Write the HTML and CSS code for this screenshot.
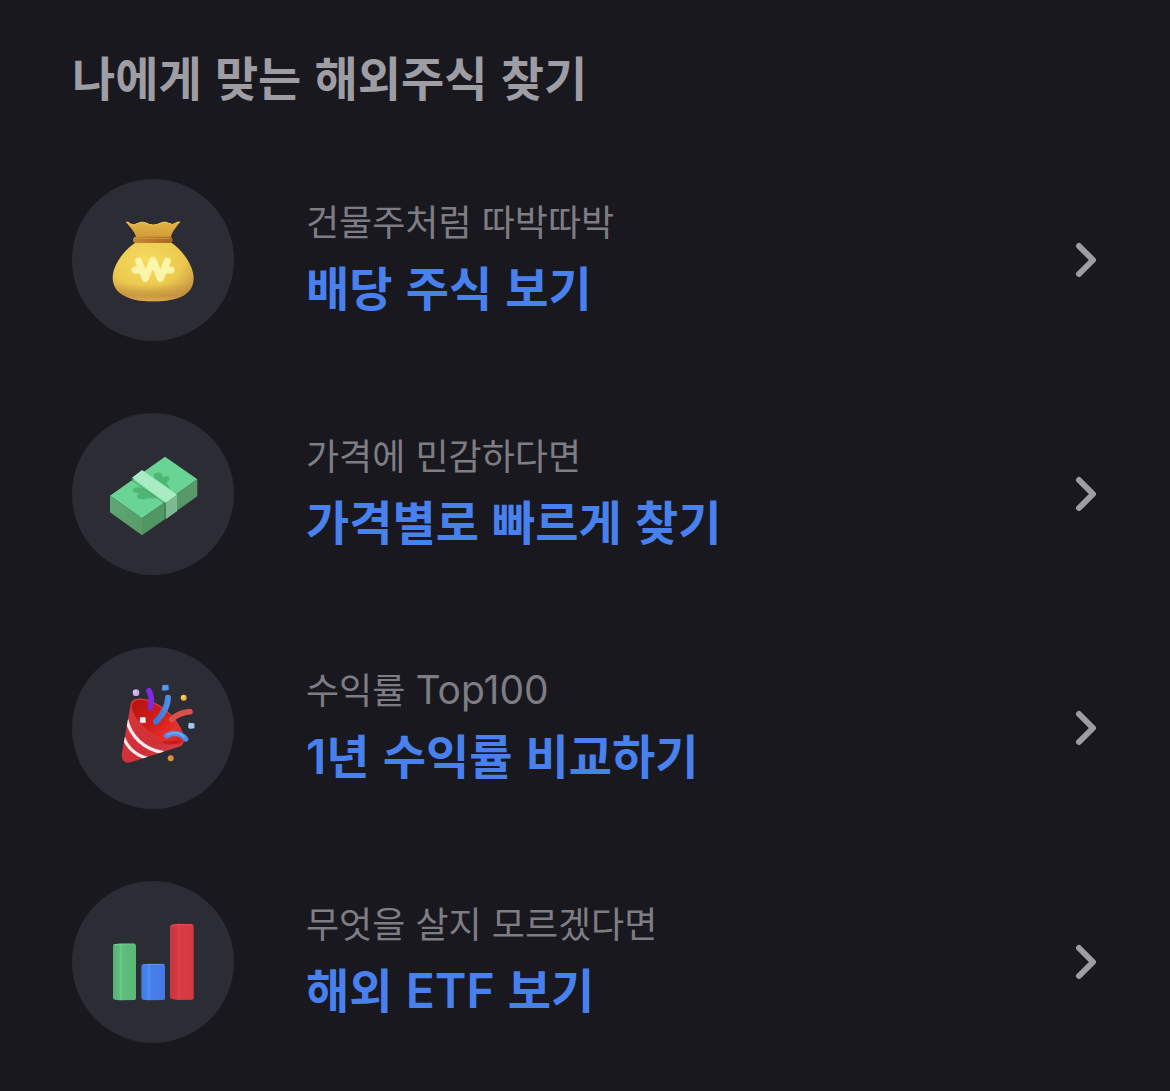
FILE: index.html
```html
<!DOCTYPE html>
<html lang="ko">
<head>
  <meta charset="UTF-8" />
  <meta name="viewport" content="width=device-width, initial-scale=1.0"/>
  <title>해외주식 찾기</title>
  <link rel="stylesheet" href="styles.css">
</head>
<body>
  <main class="finder">
    <h1>나에게 맞는 해외주식 찾기</h1>
    <nav class="list">
      <a class="item" href="#dividend">
        <span class="icon">
          <svg viewBox="114 120 270 270" aria-hidden="true">
            <defs>
              <radialGradient id="bag" cx="0.42" cy="0.3" r="0.75">
                <stop offset="0" stop-color="#f5dc60"/>
                <stop offset="0.6" stop-color="#ecc94f"/>
                <stop offset="1" stop-color="#c69340"/>
              </radialGradient>
              <linearGradient id="bagBase" x1="0" y1="0" x2="0" y2="1">
                <stop offset="0.7" stop-color="#c08a3c" stop-opacity="0"/>
                <stop offset="0.9" stop-color="#c08a3c" stop-opacity="0.55"/>
                <stop offset="1" stop-color="#e0b458" stop-opacity="0.7"/>
              </linearGradient>
              <linearGradient id="bagTop" x1="0" y1="0" x2="0" y2="1">
                <stop offset="0" stop-color="#e3b444"/>
                <stop offset="1" stop-color="#cf9a38"/>
              </linearGradient>
              <linearGradient id="rope" x1="0" y1="0" x2="1" y2="0">
                <stop offset="0" stop-color="#c48a35"/>
                <stop offset="0.5" stop-color="#b97828"/>
                <stop offset="1" stop-color="#a5661f"/>
              </linearGradient>
            </defs>
            <path d="M168 142Q174 139 182 147Q190 153 204 145Q214 139 226 143Q238 150 250 150Q262 150 272 144Q286 138 296 145Q308 152 318 144Q324 139 330 142C318 157 307 169 302 188H199C194 170 181 157 168 142Z" fill="url(#bagTop)"/>
            <path d="M168 142Q174 139 182 147Q190 153 204 145Q214 139 226 143Q238 150 250 150Q262 150 272 144Q286 138 296 145Q308 152 318 144Q324 139 330 142" fill="none" stroke="#f3cf58" stroke-width="3"/>
            <path d="M198 202H302C333 220 371 270 371 310C371 355 332 379 249 379C166 379 128 350 128 308C128 270 162 225 198 202Z" fill="url(#bag)"/>
            <path d="M198 202H302C333 220 371 270 371 310C371 355 332 379 249 379C166 379 128 350 128 308C128 270 162 225 198 202Z" fill="url(#bagBase)"/>
            <rect x="189" y="185" width="119" height="19" rx="9" fill="url(#rope)"/>
            <path d="M196 190H300" stroke="#d29a45" stroke-width="3" stroke-linecap="round"/>
            <path d="M206 258L226 310L249 256L271 310L292 258M195 285H214M284 285H303" fill="none" stroke="#fbf5aa" stroke-width="21" stroke-linecap="round" stroke-linejoin="round"/>
          </svg>
        </span>
        <span class="text">
          <span class="sub">건물주처럼 따박따박</span>
          <strong class="name">배당 주식 보기</strong>
        </span>
        <svg class="arrow" viewBox="0 0 24 36" aria-hidden="true"><path d="M5 4L19 18L5 32"/></svg>
      </a>

      <a class="item" href="#price">
        <span class="icon">
          <svg viewBox="114 117 270 270" aria-hidden="true">
            <defs>
              <linearGradient id="cashLeft" x1="0" y1="0" x2="1" y2="1">
                <stop offset="0" stop-color="#5ea873"/>
                <stop offset="1" stop-color="#579b69"/>
              </linearGradient>
              <linearGradient id="cashRight" x1="0" y1="1" x2="1" y2="0">
                <stop offset="0" stop-color="#4f9563"/>
                <stop offset="1" stop-color="#579b69"/>
              </linearGradient>
            </defs>
            <path d="M120 257L285 140L382 208L216 325Z" fill="#6ad494"/>
            <path d="M120 257L216 325V376L120 307Z" fill="url(#cashLeft)"/>
            <path d="M216 325L382 208V259L216 376Z" fill="url(#cashRight)"/>
            <path d="M188 239C190 230 210 229 221 236L262 262Q250 268 238 264Q222 270 207 266C196 261 201 253 210 251L198 248Q188 246 188 239Z" fill="#4fb676"/>
            <path d="M251 196C251 187 268 185 276 192Q281 199 279 203Q286 196 295 199C302 205 299 213 289 217L301 237L254 206Z" fill="#4fb676"/>
            <path d="M184 203L190 212L288 282V326L282 328V280L184 210Z" fill="#3f8757"/>
            <path d="M186 203L216 180L321 254L288 278Z" fill="#a9ebc2"/>
            <path d="M288 278L321 254V304L288 327Z" fill="#7fb992"/>
          </svg>
        </span>
        <span class="text">
          <span class="sub">가격에 민감하다면</span>
          <strong class="name">가격별로 빠르게 찾기</strong>
        </span>
        <svg class="arrow" viewBox="0 0 24 36" aria-hidden="true"><path d="M5 4L19 18L5 32"/></svg>
      </a>

      <a class="item" href="#return">
        <span class="icon">
          <svg viewBox="114 114 270 270" aria-hidden="true">
            <defs>
              <linearGradient id="cone" x1="0" y1="0" x2="1" y2="1">
                <stop offset="0" stop-color="#d93a42"/>
                <stop offset="0.6" stop-color="#cf3038"/>
                <stop offset="1" stop-color="#d94a50"/>
              </linearGradient>
              <linearGradient id="mouth" x1="0" y1="0" x2="1" y2="1">
                <stop offset="0" stop-color="#b3120f"/>
                <stop offset="0.5" stop-color="#d41f1c"/>
                <stop offset="0.75" stop-color="#e8302a"/>
                <stop offset="1" stop-color="#c81c1c"/>
              </linearGradient>
              <linearGradient id="streamer" x1="0" y1="0" x2="1" y2="0">
                <stop offset="0" stop-color="#3d76d8"/>
                <stop offset="1" stop-color="#4f8ce6"/>
              </linearGradient>
              <clipPath id="coneShape">
                <path d="M182 178C184 158 220 154 256 174C310 200 344 258 341 288C340 300 333 304 322 307L183 352C166 357 153 347 155 329Z"/>
              </clipPath>
            </defs>
            <g clip-path="url(#coneShape)">
              <rect x="150" y="150" width="200" height="210" fill="url(#cone)"/>
              <path d="M170 224C182 275 222 312 280 323" fill="none" stroke="#f1e9ea" stroke-width="10"/>
              <path d="M160 276C172 307 196 330 232 340" fill="none" stroke="#f1e9ea" stroke-width="10"/>
            </g>
            <path d="M184 180C187 159 222 157 256 176C308 203 343 257 339 287C335 308 291 301 249 271C207 241 181 206 184 180Z" fill="url(#mouth)" stroke="#d6353a" stroke-width="4"/>
            <path d="M274 292C290 282 304 292 330 286C318 302 292 302 274 292Z" fill="#b81517" opacity="0.6"/>
            <path d="M237 137C245 152 246 168 241 187" fill="none" stroke="#7d2be0" stroke-width="17" stroke-linecap="round"/>
            <path d="M294 158C294 185 280 206 258 230" fill="none" stroke="url(#streamer)" stroke-width="18" stroke-linecap="round"/>
            <path d="M305 223C318 211 337 202 360 200" fill="none" stroke="#d9504f" stroke-width="17" stroke-linecap="round"/>
            <path d="M290 272C307 261 334 264 347 282" fill="none" stroke="#4f8de6" stroke-width="16" stroke-linecap="round"/>
            <path d="M293 269C310 260 328 263 341 274" fill="none" stroke="#74abf3" stroke-width="5" stroke-linecap="round"/>
            <circle cx="198" cy="143" r="10" fill="#c9a8ec"/>
            <circle cx="195" cy="140" r="5" fill="#dcc6f5"/>
            <circle cx="341" cy="158" r="9" fill="#edbd42"/>
            <circle cx="339" cy="155" r="4" fill="#f7d66b"/>
            <circle cx="302" cy="340" r="9" fill="#dc9237"/>
            <path d="M277 120L295 119L297 135L280 138L275 134Z" fill="#4a86df"/>
            <path d="M279 121L295 121L294 134L279 134Z" fill="#5b98e9"/>
            <path d="M356 233L373 235L374 250L359 252L354 247Z" fill="#8db4e8"/>
            <path d="M357 235L372 237L371 249L357 248Z" fill="#a6c8f3"/>
            <path d="M210 217L226 217L228 233L214 235L209 231Z" fill="#d6d1d5"/>
            <path d="M211 218L226 218L225 231L211 231Z" fill="#f6f2f3"/>
          </svg>
        </span>
        <span class="text">
          <span class="sub">수익률 <span class="latin">Top100</span></span>
          <strong class="name"><span class="latin">1</span>년 수익률 비교하기</strong>
        </span>
        <svg class="arrow" viewBox="0 0 24 36" aria-hidden="true"><path d="M5 4L19 18L5 32"/></svg>
      </a>

      <a class="item" href="#etf">
        <span class="icon">
          <svg viewBox="114 111 270 270" aria-hidden="true">
            <defs>
              <linearGradient id="green" x1="0" y1="0" x2="1" y2="0">
                <stop offset="0" stop-color="#58b172"/>
                <stop offset="0.28" stop-color="#60bd7c"/>
                <stop offset="0.33" stop-color="#6fcd8c"/>
                <stop offset="0.4" stop-color="#5fbf7c"/>
                <stop offset="1" stop-color="#5ab776"/>
              </linearGradient>
              <linearGradient id="blue" x1="0" y1="0" x2="1" y2="0">
                <stop offset="0" stop-color="#3f7be4"/>
                <stop offset="0.26" stop-color="#4684ef"/>
                <stop offset="0.32" stop-color="#5591f4"/>
                <stop offset="0.4" stop-color="#477fed"/>
                <stop offset="1" stop-color="#4379e6"/>
              </linearGradient>
              <linearGradient id="red" x1="0" y1="0" x2="1" y2="0">
                <stop offset="0" stop-color="#c8363f"/>
                <stop offset="0.3" stop-color="#d03a43"/>
                <stop offset="0.36" stop-color="#e04048"/>
                <stop offset="0.44" stop-color="#d93b42"/>
                <stop offset="1" stop-color="#d5393f"/>
              </linearGradient>
            </defs>
            <path d="M134 192L150 191H193Q198 192 198 197V355Q198 360 193 360L150 361L134 359Q129 358 129 353V197Q129 193 134 192Z" fill="url(#green)"/>
            <path d="M133 194L150 192H194" fill="none" stroke="#86dba0" stroke-width="2"/>
            <path d="M220 253L235 252H280Q285 253 285 258V355Q285 360 280 360L235 361L220 359Q214 358 214 353V258Q214 254 220 253Z" fill="url(#blue)"/>
            <path d="M219 255L235 253H281" fill="none" stroke="#70a6fa" stroke-width="2"/>
            <path d="M305 134L324 132L366 133Q371 134 371 139V354Q371 359 366 359L324 360L305 357Q300 355 300 350V141Q300 136 305 134Z" fill="url(#red)"/>
            <path d="M304 136L324 133L367 134" fill="none" stroke="#ef6267" stroke-width="2"/>
          </svg>
        </span>
        <span class="text">
          <span class="sub">무엇을 살지 모르겠다면</span>
          <strong class="name">해외 <span class="latin">ETF</span> 보기</strong>
        </span>
        <svg class="arrow" viewBox="0 0 24 36" aria-hidden="true"><path d="M5 4L19 18L5 32"/></svg>
      </a>
    </nav>
  </main>
</body>
</html>
```
FILE: styles.css
```css
* { margin: 0; padding: 0; box-sizing: border-box; }
body {
  font-family: "Noto Sans CJK KR", sans-serif;
  background: #19181e;
  color: #9e9da4;
}
.finder { padding: 40px 72px 48px; }
h1 {
  font-size: 47px;
  line-height: 72px;
  font-weight: 700;
}
.list {
  display: flex;
  flex-direction: column;
  gap: 72px;
  margin-top: 67px;
}
.item {
  display: flex;
  align-items: center;
  gap: 72px;
  color: inherit;
  text-decoration: none;
}
.icon {
  display: flex;
  align-items: center;
  justify-content: center;
  flex: none;
  width: 162px;
  height: 162px;
  border-radius: 50%;
  background: #2c2c35;
}
.icon svg { width: 90px; height: 90px; }
.text {
  flex: 1;
  display: flex;
  flex-direction: column;
  padding-bottom: 8px;
}
.sub {
  font-size: 36px;
  line-height: 60px;
  color: #7e7d84;
}
.name {
  font-size: 47px;
  line-height: 72px;
  font-weight: 700;
  color: #4880ee;
}
.latin { font-family: Inter, sans-serif; line-height: 1; }
.sub .latin { font-size: 39px; }
.name .latin { font-size: 48px; font-weight: 600; }
.arrow {
  flex: none;
  width: 24px;
  height: 36px;
  fill: none;
  stroke: #9e9da4;
  stroke-width: 6;
  stroke-linecap: round;
  stroke-linejoin: round;
}
```
